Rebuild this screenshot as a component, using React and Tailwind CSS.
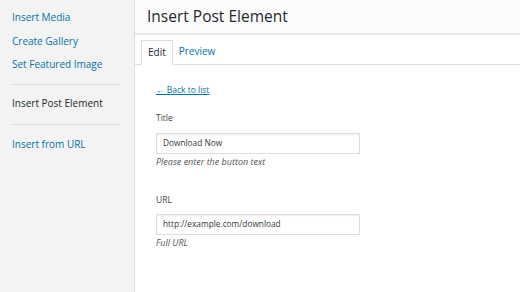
export default function App() {
  const font = { fontFamily: '"Open Sans", sans-serif' };
  return (
    <div className="flex h-[292px] w-[520px] overflow-hidden bg-white text-[#444]" style={font}>
      <div className="flex w-[135px] shrink-0 flex-col border-r border-[#dddddd] bg-[#f3f3f3] pl-3 pr-[14px] pt-[6px] text-[10px]">
        <a className="py-[4px] leading-[15px] text-[#0073aa]">Insert Media</a>
        <a className="mt-[1px] py-[4px] leading-[15px] text-[#0073aa]">Create Gallery</a>
        <a className="mt-[0px] py-[4px] leading-[15px] text-[#0073aa]">Set Featured Image</a>
        <div className="mt-[8px] border-t border-[#dddddd]" />
        <div className="mt-[7px] py-[4px] leading-[15px] text-[#23282d]">Insert Post Element</div>
        <div className="mt-[9px] border-t border-[#dddddd]" />
        <a className="mt-[8px] py-[4px] leading-[15px] text-[#0073aa]">Insert from URL</a>
      </div>
      <div className="flex flex-1 flex-col">
        <div className="flex h-[35px] items-center border-b-2 border-[#e8e8e8] bg-[#fcfcfc] pl-[12px] text-[15.5px] text-[#23282d]">
          <span className="mt-[1px]">Insert Post Element</span>
        </div>
        <div className="flex h-[30px] items-end border-b border-[#dddddd] pl-[6px] text-[10px]">
          <div className="-mb-px flex h-[25px] items-center border border-b-white border-[#dddddd] bg-white px-[6px] text-[#23282d]">Edit</div>
          <div className="flex h-[25px] items-center px-[6px] text-[#0073aa]">Preview</div>
        </div>
        <div className="flex flex-col pl-[21px] pt-[18px] text-[8.5px]">
          <a className="leading-[14px] text-[#0073aa] underline">← Back to list</a>
          <div className="mt-[14px] leading-[14px] text-[#444]">Title</div>
          <div className="mt-[8px] flex h-[21px] w-[204px] items-center border border-[#dddddd] px-[6px] text-[8.3px] text-[#32373c] shadow-[inset_0_1px_2px_rgba(0,0,0,0.07)]">Download Now</div>
          <div className="mt-[1px] text-[9px] leading-[14px] italic text-[#555]">Please enter the button text</div>
          <div className="mt-[24px] leading-[14px] text-[#444]">URL</div>
          <div className="mt-[7px] flex h-[21px] w-[204px] items-center border border-[#dddddd] px-[6px] text-[8.3px] text-[#32373c] shadow-[inset_0_1px_2px_rgba(0,0,0,0.07)]">http://example.com/download</div>
          <div className="mt-[1px] text-[9px] leading-[14px] italic text-[#555]">Full URL</div>
        </div>
      </div>
    </div>
  );
}
